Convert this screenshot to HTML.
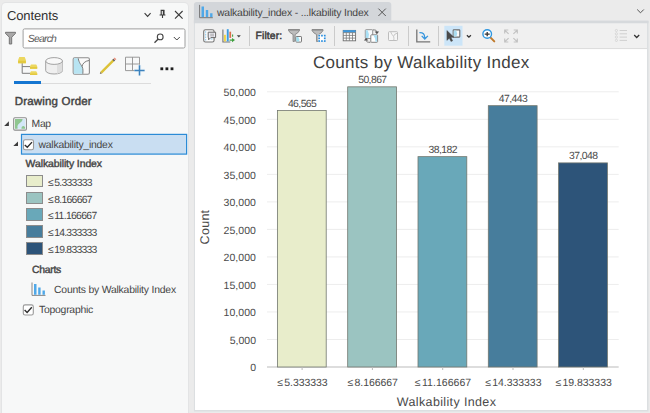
<!DOCTYPE html>
<html><head><meta charset="utf-8"><title>Counts by Walkability Index</title>
<style>
html,body{margin:0;padding:0}
body{width:650px;height:413px;overflow:hidden;background:#ebebeb;font-family:"Liberation Sans",sans-serif;position:relative;text-rendering:geometricPrecision}
.t{position:absolute;white-space:nowrap;line-height:1;display:block}
.a{position:absolute}
svg{position:absolute;overflow:visible}
</style></head><body>
<div class="a" style="left:1.5px;top:2.5px;width:186.5px;height:411px;background:#f7f8f8;border-radius:4px 4px 0 0;box-shadow:0 0 0 1px #e3e4e5"></div>
<span class="t" style="left:7.00px;top:9.00px;font-size:13px;letter-spacing:-0.129px;color:#2f2f2f;">Contents</span>
<svg style="left:144px;top:9px" width="40" height="11" viewBox="144 9 40 11"><path d="M144.6 13.2 L147.6 16.4 L150.6 13.2" fill="none" stroke="#3a3a3a" stroke-width="1.1"/><path d="M160.6 10.4 h3.8 M161.2 10.4 v4.6 M159.6 15 h5.800 M162.5 15 v3" fill="none" stroke="#3a3a3a" stroke-width="1.1"/><path d="M163.700 10.400 v4.600" stroke="#3a3a3a" stroke-width="1.700"/><path d="M175 11 L182.6 18.6 M182.6 11 L175 18.6" fill="none" stroke="#3a3a3a" stroke-width="1.1"/></svg>
<svg style="left:4px;top:31px" width="14" height="15" viewBox="4 31 14 15"><path d="M5.500 32.300 H15.500 V33.400 L11.700 37.200 V44 H9.300 V37.200 L5.500 33.400 Z" fill="#a8a8a8" stroke="#6c6c6c" stroke-width="0.900" stroke-linejoin="round"/></svg>
<svg style="left:22px;top:28px" width="165" height="22" viewBox="22 28 165 22"><rect x="23.100" y="28.900" width="161.900" height="19.100" rx="1.500" fill="#fff" stroke="#9e9e9e" stroke-width="1"/></svg>
<span class="t" style="left:27.80px;top:35.00px;font-size:10.4px;letter-spacing:-0.776px;font-style:italic;color:#5a5a5a;">Search</span>
<svg style="left:154px;top:33px" width="27" height="11" viewBox="154 33 27 11"><circle cx="160.2" cy="36.9" r="2.9" fill="none" stroke="#444" stroke-width="1.1"/><path d="M158.2 39 L154.5 42.8" stroke="#444" stroke-width="1.3"/><path d="M173.8 37 L176.8 40 L179.8 37" fill="none" stroke="#444" stroke-width="1"/></svg>
<svg style="left:14px;top:55px" width="165" height="30" viewBox="14 55 165 30"><path d="M22.200 63 V73.300 H30.500 M22.200 66.600 H30.500" fill="none" stroke="#7c7c7c" stroke-width="1"/><path d="M19.300 56.900 h5.400 l1.200 3 v3.400 h-7.800 v-3.400z M31 64.500 h5.200 l1 1.800 v2.400 h-7.200 v-2.400z M31 71.300 h5.200 l1 1.600 v2.100 h-7.200 v-2.100z" fill="#ecd75f"/><path d="M18.100 60.800 h7.800 v2.500 h-7.800z M30 67 h7.200 v1.700 h-7.200z M30 73.500 h7.200 v1.500 h-7.200z" fill="#e3c93f"/><path d="M45.700 61 v9.600 a8.400 3.400 0 0 0 16.800 0 v-9.600" fill="#efefef" stroke="#a2a2a2" stroke-width="1"/><path d="M57 64.200 q3.600 -0.500 5.500 -2.400 v8.800 q-1.400 2.300 -5.500 3.200z" fill="#dedede"/><ellipse cx="54.100" cy="61" rx="8.400" ry="3.400" fill="#f8f8f8" stroke="#a2a2a2" stroke-width="1"/><rect x="73.2" y="57.7" width="16.2" height="16.6" rx="1.5" fill="#fafafa" stroke="#8c8c8c" stroke-width="1.1"/><path d="M73.8 58.3 h4.4 c1 5 3 6.5 4 8.5 c1 2 0.8 4.5 0.6 7 h-9z" fill="#b8e4f2"/><path d="M78.2 58.3 c1 5 3 6.500 4 8.5 c1 2 0.800 4.500 0.600 7 M82 66.5 c0.5 -3 3 -5.5 7 -6" fill="none" stroke="#7d7d7d" stroke-width="1"/><path d="M101.200 72.600 L113.400 60.400" stroke="#dcc238" stroke-width="2.400"/><path d="M113.200 60.600 L114.300 59.500" stroke="#5a5a5a" stroke-width="2.400"/><path d="M114.300 59.500 L115.500 58.300" stroke="#ea937e" stroke-width="2.400"/><path d="M99.800 74 L100.400 71.800 L102 73.400z" fill="#8a7a55"/><path d="M125.500 57.200 h14 v13.400 h-14z M132.500 57.200 v13.400 M125.500 64 h14" fill="none" stroke="#8f8f8f" stroke-width="0.900"/><path d="M139.500 64.800 v11 M134.200 70.400 h10.600" stroke="#eaf3fa" stroke-width="3.400"/><path d="M139.500 65.200 v10.400 M134.400 70.400 h10.200" stroke="#3c82bd" stroke-width="1.500"/><rect x="160.4" y="67.400" width="2.800" height="2.800" fill="#1f1f1f"/><rect x="165.500" y="67.400" width="2.800" height="2.800" fill="#1f1f1f"/><rect x="170.600" y="67.400" width="2.800" height="2.800" fill="#1f1f1f"/></svg>
<div class="a" style="left:41px;top:82.7px;width:109.5px;height:1px;background:#dcdcdc"></div>
<div class="a" style="left:14px;top:81.2px;width:27.2px;height:2.8px;background:#1576d1"></div>
<span class="t" style="left:14.70px;top:97.00px;font-size:11.5px;letter-spacing:0.187px;color:#444;-webkit-text-stroke:0.45px #444;">Drawing Order</span>
<svg style="left:4px;top:116px" width="24" height="16" viewBox="4 116 24 16"><path d="M8.900 121.300 V126 H4.200z" fill="#3c3c3c"/><rect x="13.700" y="117.700" width="12.700" height="12.400" rx="1.200" fill="#fff" stroke="#8a8a8a" stroke-width="1.100"/><rect x="15" y="118.900" width="10.200" height="9.900" fill="#d3e7f7"/><path d="M15 118.900 H22.600 C22.400 121 21 122 19.800 123 C18.600 124 17.600 125 17.400 126.400 C17.800 127.400 17.400 128.200 17.600 128.800 H15 Z M21.400 128.800 C21.400 126.600 22.600 126 23.400 126 C24.400 126 25.200 126.800 25.200 128.800 Z" fill="#8fc690"/></svg>
<span class="t" style="left:31.60px;top:120.00px;font-size:10.4px;letter-spacing:-0.344px;color:#454545;">Map</span>
<svg style="left:13px;top:133px" width="176" height="23" viewBox="13 133 176 23"><rect x="21.500" y="134.400" width="165.100" height="19.700" fill="#c9def2" stroke="#2b8bd6" stroke-width="1.200"/><path d="M18 141.500 V146 H13.300z" fill="#3c3c3c"/><rect x="23.500" y="139.700" width="10" height="10.100" rx="1.800" fill="#fff" stroke="#999" stroke-width="1.100"/><path d="M24.800 144.900 L27.300 147.300 L32 142.100" fill="none" stroke="#2e2e2e" stroke-width="1.400"/></svg>
<span class="t" style="left:38.50px;top:141.00px;font-size:10.4px;letter-spacing:-0.226px;color:#454545;">walkability_index</span>
<span class="t" style="left:25.60px;top:160.00px;font-size:10.4px;letter-spacing:-0.073px;color:#444;-webkit-text-stroke:0.4px #444;">Walkability Index</span>
<div class="a" style="left:25.900px;top:174.90px;width:15px;height:10.500px;background:#e8edcb;border:1px solid #8c8c8c;box-sizing:content-box"></div>
<span class="t" style="left:47.90px;top:179.00px;font-size:10.4px;letter-spacing:-0.710px;color:#454545;"><span style="margin-right:1.30px">≤</span>5.333333</span>
<div class="a" style="left:25.900px;top:191.68px;width:15px;height:10.500px;background:#9bc4c1;border:1px solid #8c8c8c;box-sizing:content-box"></div>
<span class="t" style="left:47.90px;top:196.00px;font-size:10.4px;letter-spacing:-0.710px;color:#454545;"><span style="margin-right:1.30px">≤</span>8.166667</span>
<div class="a" style="left:25.900px;top:208.46px;width:15px;height:10.500px;background:#69a8b9;border:1px solid #8c8c8c;box-sizing:content-box"></div>
<span class="t" style="left:47.90px;top:212.00px;font-size:10.4px;letter-spacing:-0.670px;color:#454545;"><span style="margin-right:1.30px">≤</span>11.166667</span>
<div class="a" style="left:25.900px;top:225.24px;width:15px;height:10.500px;background:#477d9c;border:1px solid #8c8c8c;box-sizing:content-box"></div>
<span class="t" style="left:47.90px;top:229.00px;font-size:10.4px;letter-spacing:-0.747px;color:#454545;"><span style="margin-right:1.30px">≤</span>14.333333</span>
<div class="a" style="left:25.900px;top:242.02px;width:15px;height:10.500px;background:#2d5479;border:1px solid #8c8c8c;box-sizing:content-box"></div>
<span class="t" style="left:47.90px;top:246.00px;font-size:10.4px;letter-spacing:-0.747px;color:#454545;"><span style="margin-right:1.30px">≤</span>19.833333</span>
<span class="t" style="left:32.00px;top:266.00px;font-size:10.4px;letter-spacing:-0.272px;color:#444;-webkit-text-stroke:0.4px #444;">Charts</span>
<svg style="left:31px;top:282px" width="15" height="15" viewBox="31 282 15 15"><path d="M32 282.500 V295.400 H45.500" fill="none" stroke="#7a7a7a" stroke-width="0.900"/><path d="M34 284 h2.500 v10.800 h-2.500z M38.200 287.400 h2.400 v7.400 h-2.400z M42.500 290.500 h2.400 v4.300 h-2.400z" fill="#4fa8e8"/></svg>
<span class="t" style="left:54.00px;top:286.00px;font-size:10.4px;letter-spacing:-0.199px;color:#454545;">Counts by Walkability Index</span>
<svg style="left:22px;top:304px" width="13" height="13" viewBox="22 304 13 13"><rect x="23.300" y="304.900" width="10" height="10.100" rx="1.800" fill="#fff" stroke="#999" stroke-width="1.100"/><path d="M24.600 310.100 L27.100 312.500 L31.800 307.300" fill="none" stroke="#2e2e2e" stroke-width="1.400"/></svg>
<span class="t" style="left:39.10px;top:306.00px;font-size:10.4px;letter-spacing:-0.251px;color:#454545;">Topographic</span>
<svg style="left:190px;top:0px" width="460" height="413" viewBox="190 0 460 413"><path d="M193.900 23 V5 Q193.900 2 196.900 2 H388.300 Q391.300 2 391.300 5 V23 Z" fill="#d3d6da"/><rect x="193.900" y="20.700" width="454.600" height="390.800" fill="#dcdfe1"/><rect x="193.900" y="20.700" width="454.600" height="2.600" fill="#d6d9dc"/><rect x="195" y="23.300" width="452" height="24.700" fill="#f0f0f0"/><rect x="195" y="48" width="452" height="1.100" fill="#dddddd"/><rect x="195" y="49.100" width="452" height="360.900" fill="#fff"/></svg>
<svg style="left:199px;top:4px" width="14" height="15" viewBox="199 4 14 15"><path d="M199.600 4.900 V17.700 H212.800" fill="none" stroke="#6c6c6c" stroke-width="0.900"/><path d="M201.500 6.500 h2.500 v10.500 h-2.500z M205.800 10 h2.400 v7 h-2.400z M210.100 13.200 h2.400 v3.800 h-2.400z" fill="#4fa8e8"/></svg>
<span class="t" style="left:217.00px;top:9.00px;font-size:10.4px;letter-spacing:-0.176px;color:#444;">walkability_index - ...lkability Index</span>
<svg style="left:378px;top:8px" width="9" height="9" viewBox="378 8 9 9"><path d="M378.400 8.600 L385.800 16 M385.800 8.600 L378.400 16" stroke="#505050" stroke-width="0.950"/></svg>
<svg style="left:636px;top:8px" width="9" height="6" viewBox="636 8 9 6"><path d="M637.200 9.500 L640.500 12.800 L643.800 9.500" fill="none" stroke="#555" stroke-width="1"/></svg>
<span class="t" style="left:255.60px;top:32.00px;font-size:10.4px;letter-spacing:0.086px;color:#3a3a3a;-webkit-text-stroke:0.45px #3a3a3a;">Filter:</span>
<div class="a" style="left:248.7px;top:26px;width:1px;height:19.500px;background:#cbcbcb"></div>
<div class="a" style="left:334.0px;top:26px;width:1px;height:19.500px;background:#cbcbcb"></div>
<div class="a" style="left:407.5px;top:26px;width:1px;height:19.500px;background:#cbcbcb"></div>
<div class="a" style="left:438.0px;top:26px;width:1px;height:19.500px;background:#cbcbcb"></div>
<svg style="left:195px;top:24px" width="452" height="24" viewBox="195 24 452 24"><rect x="444.300" y="25.800" width="18.200" height="19.900" fill="#cce5f8"/><rect x="203.700" y="29.700" width="10.400" height="12.300" rx="1.800" fill="#fbfbfb" stroke="#767676" stroke-width="1.100"/><path d="M205.600 31.200 V40.600" stroke="#9fd3f2" stroke-width="1.200" stroke-dasharray="1.600 1"/><path d="M208.200 32.200 H215.600 V37.600 H210.800 L208.600 39.800 V37.600 H208.200 Z" fill="#ecebf3" stroke="#686868" stroke-width="1" stroke-linejoin="round"/><path d="M210.200 34.200 H214 M210.200 35.800 H214" stroke="#9a9a9a" stroke-width="0.800"/><path d="M210.800 39 H212.400" stroke="#9fd3f2" stroke-width="1.200"/><path d="M222.900 29.400 V42 H230.300" fill="none" stroke="#767676" stroke-width="1.100"/><rect x="224" y="34.800" width="1.900" height="6.600" fill="#f1d545"/><rect x="226.800" y="29.200" width="1.900" height="12.200" fill="#3a9de2"/><rect x="229.400" y="31.700" width="1.700" height="6.200" fill="#d96d48"/><path d="M229.600 39.400 H232 V37.900 L235 40.100 L232 42.300 V40.800 H229.600 Z" fill="#3f9f3f"/><path d="M232.600 34.400 V36.800" stroke="#3f9f3f" stroke-width="1.100"/><path d="M236.800 35.200 H240.800 L238.800 37.600 Z" fill="#444"/><path d="M288.5 29.500 H299.5 V30.500 Q298.1 33.200 295.1 34.500 V41 L293.1 41.600 V34.500 Q289.9 33.200 288.5 30.500 Z" fill="#bdbdbd" stroke="#828282" stroke-width="0.900" stroke-linejoin="round"/><rect x="288.5" y="29.300" width="11" height="1.300" fill="#8c8c8c"/><rect x="295.900" y="36.500" width="5.600" height="5.600" rx="0.600" fill="#fafafa" stroke="#7a7a7a" stroke-width="1"/><path d="M296.400 37 h1.800 l1.200 2.400 l-0.400 2.200 h-2.600z" fill="#9fdff0"/><path d="M312.0 29.500 H323.0 V30.500 Q321.6 33.200 318.6 34.500 V41 L316.6 41.600 V34.500 Q313.4 33.200 312.0 30.500 Z" fill="#bdbdbd" stroke="#828282" stroke-width="0.900" stroke-linejoin="round"/><rect x="312.0" y="29.300" width="11" height="1.300" fill="#8c8c8c"/><rect x="318" y="34.500" width="7.600" height="7.400" fill="#f0f0f0"/><rect x="319" y="35.500" width="5.800" height="5.600" fill="#fff"/><rect x="318.3" y="34.8" width="1.700" height="1.700" fill="#2b8fdf"/><rect x="318.3" y="37.5" width="1.700" height="1.700" fill="#2b8fdf"/><rect x="318.3" y="40.2" width="1.700" height="1.700" fill="#2b8fdf"/><rect x="321.1" y="34.8" width="1.700" height="1.700" fill="#2b8fdf"/><rect x="321.1" y="40.2" width="1.700" height="1.700" fill="#2b8fdf"/><rect x="323.9" y="34.8" width="1.700" height="1.700" fill="#2b8fdf"/><rect x="323.9" y="37.5" width="1.700" height="1.700" fill="#2b8fdf"/><rect x="323.9" y="40.2" width="1.700" height="1.700" fill="#2b8fdf"/><rect x="343.200" y="30.400" width="12.400" height="10.400" fill="#fff" stroke="#6f6f6f" stroke-width="0.900"/><rect x="343.200" y="30.200" width="12.400" height="2.400" fill="#3a97de"/><path d="M343.200 35.400 H355.600 M343.200 38.100 H355.600 M346.300 32.600 V40.800 M349.400 32.600 V40.800 M352.500 32.600 V40.800 M343.200 32.700 H355.600" stroke="#777" stroke-width="0.800"/><rect x="365.300" y="29.700" width="7.400" height="8.800" rx="0.800" fill="#f7fafc" stroke="#8a8a8a" stroke-width="0.900"/><path d="M365.800 30.200 h1.800 l1.400 4 l-0.600 3.800 h-2.600z" fill="#a9e0f5"/><rect x="370.800" y="34.800" width="6.800" height="7.500" rx="0.800" fill="#fff" stroke="#777" stroke-width="0.900"/><path d="M373.400 35.300 h3.700 v6.500 h-1.600 l-0.400 -3.400z" fill="#a9e0f5"/><path d="M372.800 29.900 Q376.900 29.700 376.900 32" fill="none" stroke="#777" stroke-width="1"/><path d="M374.700 31.500 H379.100 L376.900 34.300 Z" fill="#555"/><path d="M370.400 42.300 Q366.100 42.500 366.100 40.200" fill="none" stroke="#777" stroke-width="1"/><path d="M363.900 40.600 H368.300 L366.100 37.800 Z" fill="#555"/><rect x="388.500" y="31.700" width="9" height="8.800" rx="0.800" fill="#f6f6f6" stroke="#bdbdbd" stroke-width="1"/><path d="M390.800 32 q0.800 3 2.800 4.200 q0.600 2 0.200 4.200 M393.600 36.200 q0.600 -2.400 3.600 -3" fill="none" stroke="#c2c2c2" stroke-width="0.900"/><path d="M416.800 29.400 V41.800 H430.200" fill="none" stroke="#767676" stroke-width="1.300"/><path d="M419.400 32.600 q5.400 -0.400 5.400 5.600 M421.700 35.900 L424.800 39 L427.900 35.900" fill="none" stroke="#3a97de" stroke-width="1.300"/><rect x="453.200" y="29.900" width="6.600" height="7.200" rx="0.600" fill="#fafafa" stroke="#6a6a6a" stroke-width="1.100"/><path d="M453.700 30.400 h2.600 l0.800 3 l-0.600 3.200 h-2.800z" fill="#a9dcf0"/><path d="M446.900 30.500 V40.400 L449.300 38.200 L451 41.600 L452.700 40.800 L451 37.500 L454 37.300 Z" fill="#4a4a4a" stroke="#4a4a4a" stroke-width="0.400" stroke-linejoin="round"/><path d="M466.900 35.200 L468.900 37.200 L470.900 35.200" fill="none" stroke="#333" stroke-width="1.300"/><path d="M490.600 37.600 L494.300 41.400" stroke="#c07a2c" stroke-width="2" stroke-linecap="round"/><circle cx="487.200" cy="34" r="4.300" fill="#fff" stroke="#2f97e0" stroke-width="1.400"/><path d="M484.700 34.100 H489.700 M487.200 31.900 V36.300" stroke="#333" stroke-width="1.300"/><path d="M508.600 33.900 L505 30.300 M504.700 33.600 V30 H508.300 M513.400 33.900 L517 30.300 M513.700 30 H517.300 V33.600 M508.600 38.100 L505 41.700 M504.700 38.400 V42 H508.300 M513.400 38.100 L517 41.700 M513.700 42 H517.300 V38.400" fill="none" stroke="#c2c2c2" stroke-width="1.200"/><circle cx="616.400" cy="30.5" r="1.100" fill="none" stroke="#cfcfcf" stroke-width="0.700"/><path d="M619.600 30.5 H627" stroke="#cfcfcf" stroke-width="1"/><circle cx="616.400" cy="33.8" r="1.100" fill="none" stroke="#cfcfcf" stroke-width="0.700"/><path d="M619.600 33.8 H627" stroke="#cfcfcf" stroke-width="1"/><circle cx="616.400" cy="37.1" r="1.100" fill="none" stroke="#cfcfcf" stroke-width="0.700"/><path d="M619.600 37.1 H627" stroke="#cfcfcf" stroke-width="1"/><circle cx="616.400" cy="40.4" r="1.100" fill="none" stroke="#cfcfcf" stroke-width="0.700"/><path d="M619.600 40.4 H627" stroke="#cfcfcf" stroke-width="1"/><path d="M634.200 35 L636.700 37.500 L639.200 35" fill="none" stroke="#333" stroke-width="1.300"/></svg>
<span class="t" style="left:312.90px;top:54.00px;font-size:17px;letter-spacing:0.319px;color:#404040;">Counts by Walkability Index</span>
<svg style="left:195px;top:49px" width="452" height="361" viewBox="195 49 452 361"><rect x="267" y="338.98" width="351.700" height="1" fill="#ededed"/><rect x="267" y="311.46" width="351.700" height="1" fill="#ededed"/><rect x="267" y="283.94" width="351.700" height="1" fill="#ededed"/><rect x="267" y="256.42" width="351.700" height="1" fill="#ededed"/><rect x="267" y="228.90" width="351.700" height="1" fill="#ededed"/><rect x="267" y="201.38" width="351.700" height="1" fill="#ededed"/><rect x="267" y="173.86" width="351.700" height="1" fill="#ededed"/><rect x="267" y="146.34" width="351.700" height="1" fill="#ededed"/><rect x="267" y="118.82" width="351.700" height="1" fill="#ededed"/><rect x="267" y="91.30" width="351.700" height="1" fill="#ededed"/><rect x="267" y="366.50" width="351.700" height="1" fill="#bcbcbc"/><rect x="277.40" y="110.51" width="48.80" height="256.49" fill="#e8edcb" stroke="#72776f" stroke-width="0.8"/><rect x="301.60" y="367.00" width="1" height="3" fill="#bcbcbc"/><rect x="347.70" y="86.83" width="48.80" height="280.17" fill="#9bc4c1" stroke="#72776f" stroke-width="0.8"/><rect x="371.90" y="367.00" width="1" height="3" fill="#bcbcbc"/><rect x="418.00" y="156.65" width="48.80" height="210.35" fill="#69a8b9" stroke="#72776f" stroke-width="0.8"/><rect x="442.20" y="367.00" width="1" height="3" fill="#bcbcbc"/><rect x="488.30" y="105.67" width="48.80" height="261.33" fill="#477d9c" stroke="#72776f" stroke-width="0.8"/><rect x="512.50" y="367.00" width="1" height="3" fill="#bcbcbc"/><rect x="558.60" y="162.89" width="48.80" height="204.11" fill="#2d5479" stroke="#72776f" stroke-width="0.8"/><rect x="582.80" y="367.00" width="1" height="3" fill="#bcbcbc"/></svg>
<span class="t" style="left:250.20px;top:363.00px;font-size:10.5px;letter-spacing:-0.040px;color:#4a4a4a;">0</span>
<span class="t" style="left:229.80px;top:336.00px;font-size:10.5px;letter-spacing:-0.015px;color:#4a4a4a;">5,000</span>
<span class="t" style="left:223.60px;top:308.00px;font-size:10.5px;letter-spacing:0.047px;color:#4a4a4a;">10,000</span>
<span class="t" style="left:223.60px;top:281.00px;font-size:10.5px;letter-spacing:0.047px;color:#4a4a4a;">15,000</span>
<span class="t" style="left:223.60px;top:253.00px;font-size:10.5px;letter-spacing:0.047px;color:#4a4a4a;">20,000</span>
<span class="t" style="left:223.60px;top:226.00px;font-size:10.5px;letter-spacing:0.047px;color:#4a4a4a;">25,000</span>
<span class="t" style="left:223.60px;top:198.00px;font-size:10.5px;letter-spacing:0.047px;color:#4a4a4a;">30,000</span>
<span class="t" style="left:223.60px;top:171.00px;font-size:10.5px;letter-spacing:0.047px;color:#4a4a4a;">35,000</span>
<span class="t" style="left:223.60px;top:143.00px;font-size:10.5px;letter-spacing:0.047px;color:#4a4a4a;">40,000</span>
<span class="t" style="left:223.60px;top:116.00px;font-size:10.5px;letter-spacing:0.047px;color:#4a4a4a;">45,000</span>
<span class="t" style="left:223.60px;top:88.00px;font-size:10.5px;letter-spacing:0.047px;color:#4a4a4a;">50,000</span>
<span class="t" style="left:287.90px;top:100.00px;font-size:10.4px;letter-spacing:-0.568px;color:#4a4a4a;">46,565</span>
<span class="t" style="left:277.25px;top:378.00px;font-size:10.5px;letter-spacing:-0.062px;color:#4a4a4a;"><span style="margin-right:1.30px">≤</span>5.333333</span>
<span class="t" style="left:358.20px;top:76.00px;font-size:10.4px;letter-spacing:-0.568px;color:#4a4a4a;">50,867</span>
<span class="t" style="left:347.55px;top:378.00px;font-size:10.5px;letter-spacing:-0.062px;color:#4a4a4a;"><span style="margin-right:1.30px">≤</span>8.166667</span>
<span class="t" style="left:428.50px;top:146.00px;font-size:10.4px;letter-spacing:-0.568px;color:#4a4a4a;">38,182</span>
<span class="t" style="left:414.85px;top:378.00px;font-size:10.5px;letter-spacing:0.038px;color:#4a4a4a;"><span style="margin-right:1.30px">≤</span>11.166667</span>
<span class="t" style="left:498.80px;top:95.00px;font-size:10.4px;letter-spacing:-0.568px;color:#4a4a4a;">47,443</span>
<span class="t" style="left:485.15px;top:378.00px;font-size:10.5px;letter-spacing:-0.040px;color:#4a4a4a;"><span style="margin-right:1.30px">≤</span>14.333333</span>
<span class="t" style="left:569.10px;top:152.00px;font-size:10.4px;letter-spacing:-0.568px;color:#4a4a4a;">37,048</span>
<span class="t" style="left:555.45px;top:378.00px;font-size:10.5px;letter-spacing:-0.040px;color:#4a4a4a;"><span style="margin-right:1.30px">≤</span>19.833333</span>
<span class="t" style="left:396.80px;top:396.00px;font-size:12.5px;letter-spacing:0.363px;color:#4a4a4a;">Walkability Index</span>
<span class="t" id="cnt" style="left:205px;top:226.800px;font-size:12.5px;color:#4a4a4a;transform:translate(-50%,-50%) rotate(-90deg);letter-spacing:0.28px">Count</span>
</body></html>
